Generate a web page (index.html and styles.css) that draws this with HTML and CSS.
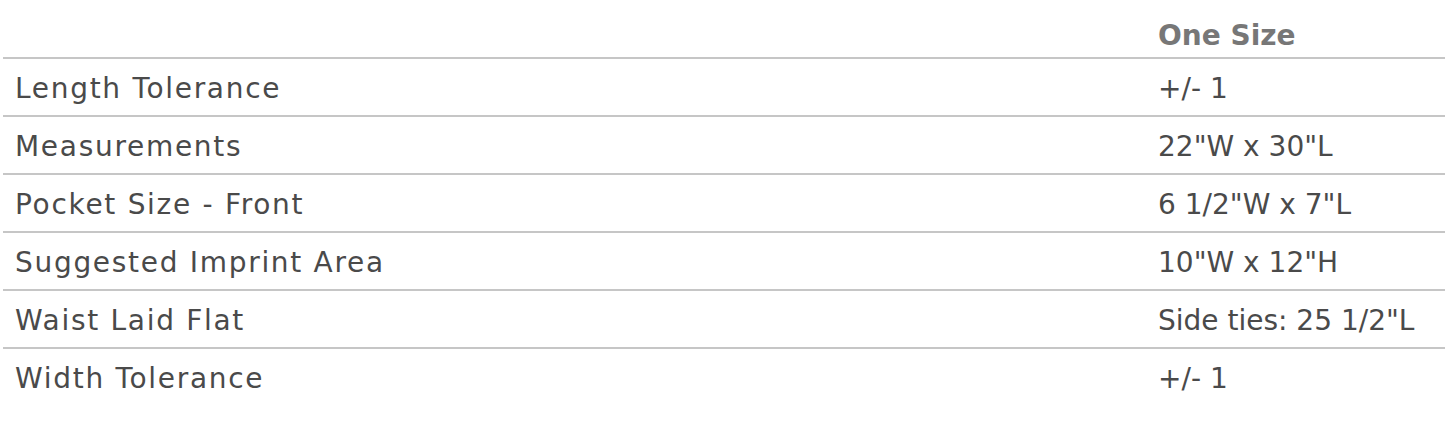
FILE: index.html
```html
<!DOCTYPE html>
<html>
<head>
<meta charset="utf-8">
<link rel="stylesheet" href="styles.css">
</head>
<body>
<div class="wrap">
<table class="spec">
<thead>
<tr><th class="label"></th><th class="val">One Size</th></tr>
</thead>
<tbody>
<tr><td class="label">Length Tolerance</td><td class="val">+/- 1</td></tr>
<tr><td class="label">Measurements</td><td class="val">22"W x 30"L</td></tr>
<tr><td class="label">Pocket Size - Front</td><td class="val">6 1/2"W x 7"L</td></tr>
<tr><td class="label">Suggested Imprint Area</td><td class="val">10"W x 12"H</td></tr>
<tr><td class="label">Waist Laid Flat</td><td class="val">Side ties: 25 1/2"L</td></tr>
<tr><td class="label">Width Tolerance</td><td class="val">+/- 1</td></tr>
</tbody>
</table>
</div>
</body>
</html>
```
FILE: styles.css
```css
html, body {
  margin: 0;
  padding: 0;
  background: #fff;
}
.wrap {
  padding-left: 3px;
}
.spec {
  width: 100%;
  border-collapse: collapse;
  font-family: "DejaVu Sans", sans-serif;
  font-size: 28px;
  color: #4a4a4a;
}
.spec th, .spec td {
  padding: 0;
  text-align: left;
  vertical-align: middle;
  white-space: nowrap;
}
.spec thead th {
  height: 58px;
  font-weight: bold;
  color: #777;
  padding-top: 14px;
  box-sizing: border-box;
}
.spec tbody td {
  height: 58px;
  border-top: 2px solid #c6c6c6;
  padding-top: 2px;
  box-sizing: border-box;
}
.spec .label {
  width: 1155px;
  padding-left: 12px;
  box-sizing: border-box;
}
.spec tbody .label {
  letter-spacing: 1.7px;
}
```
